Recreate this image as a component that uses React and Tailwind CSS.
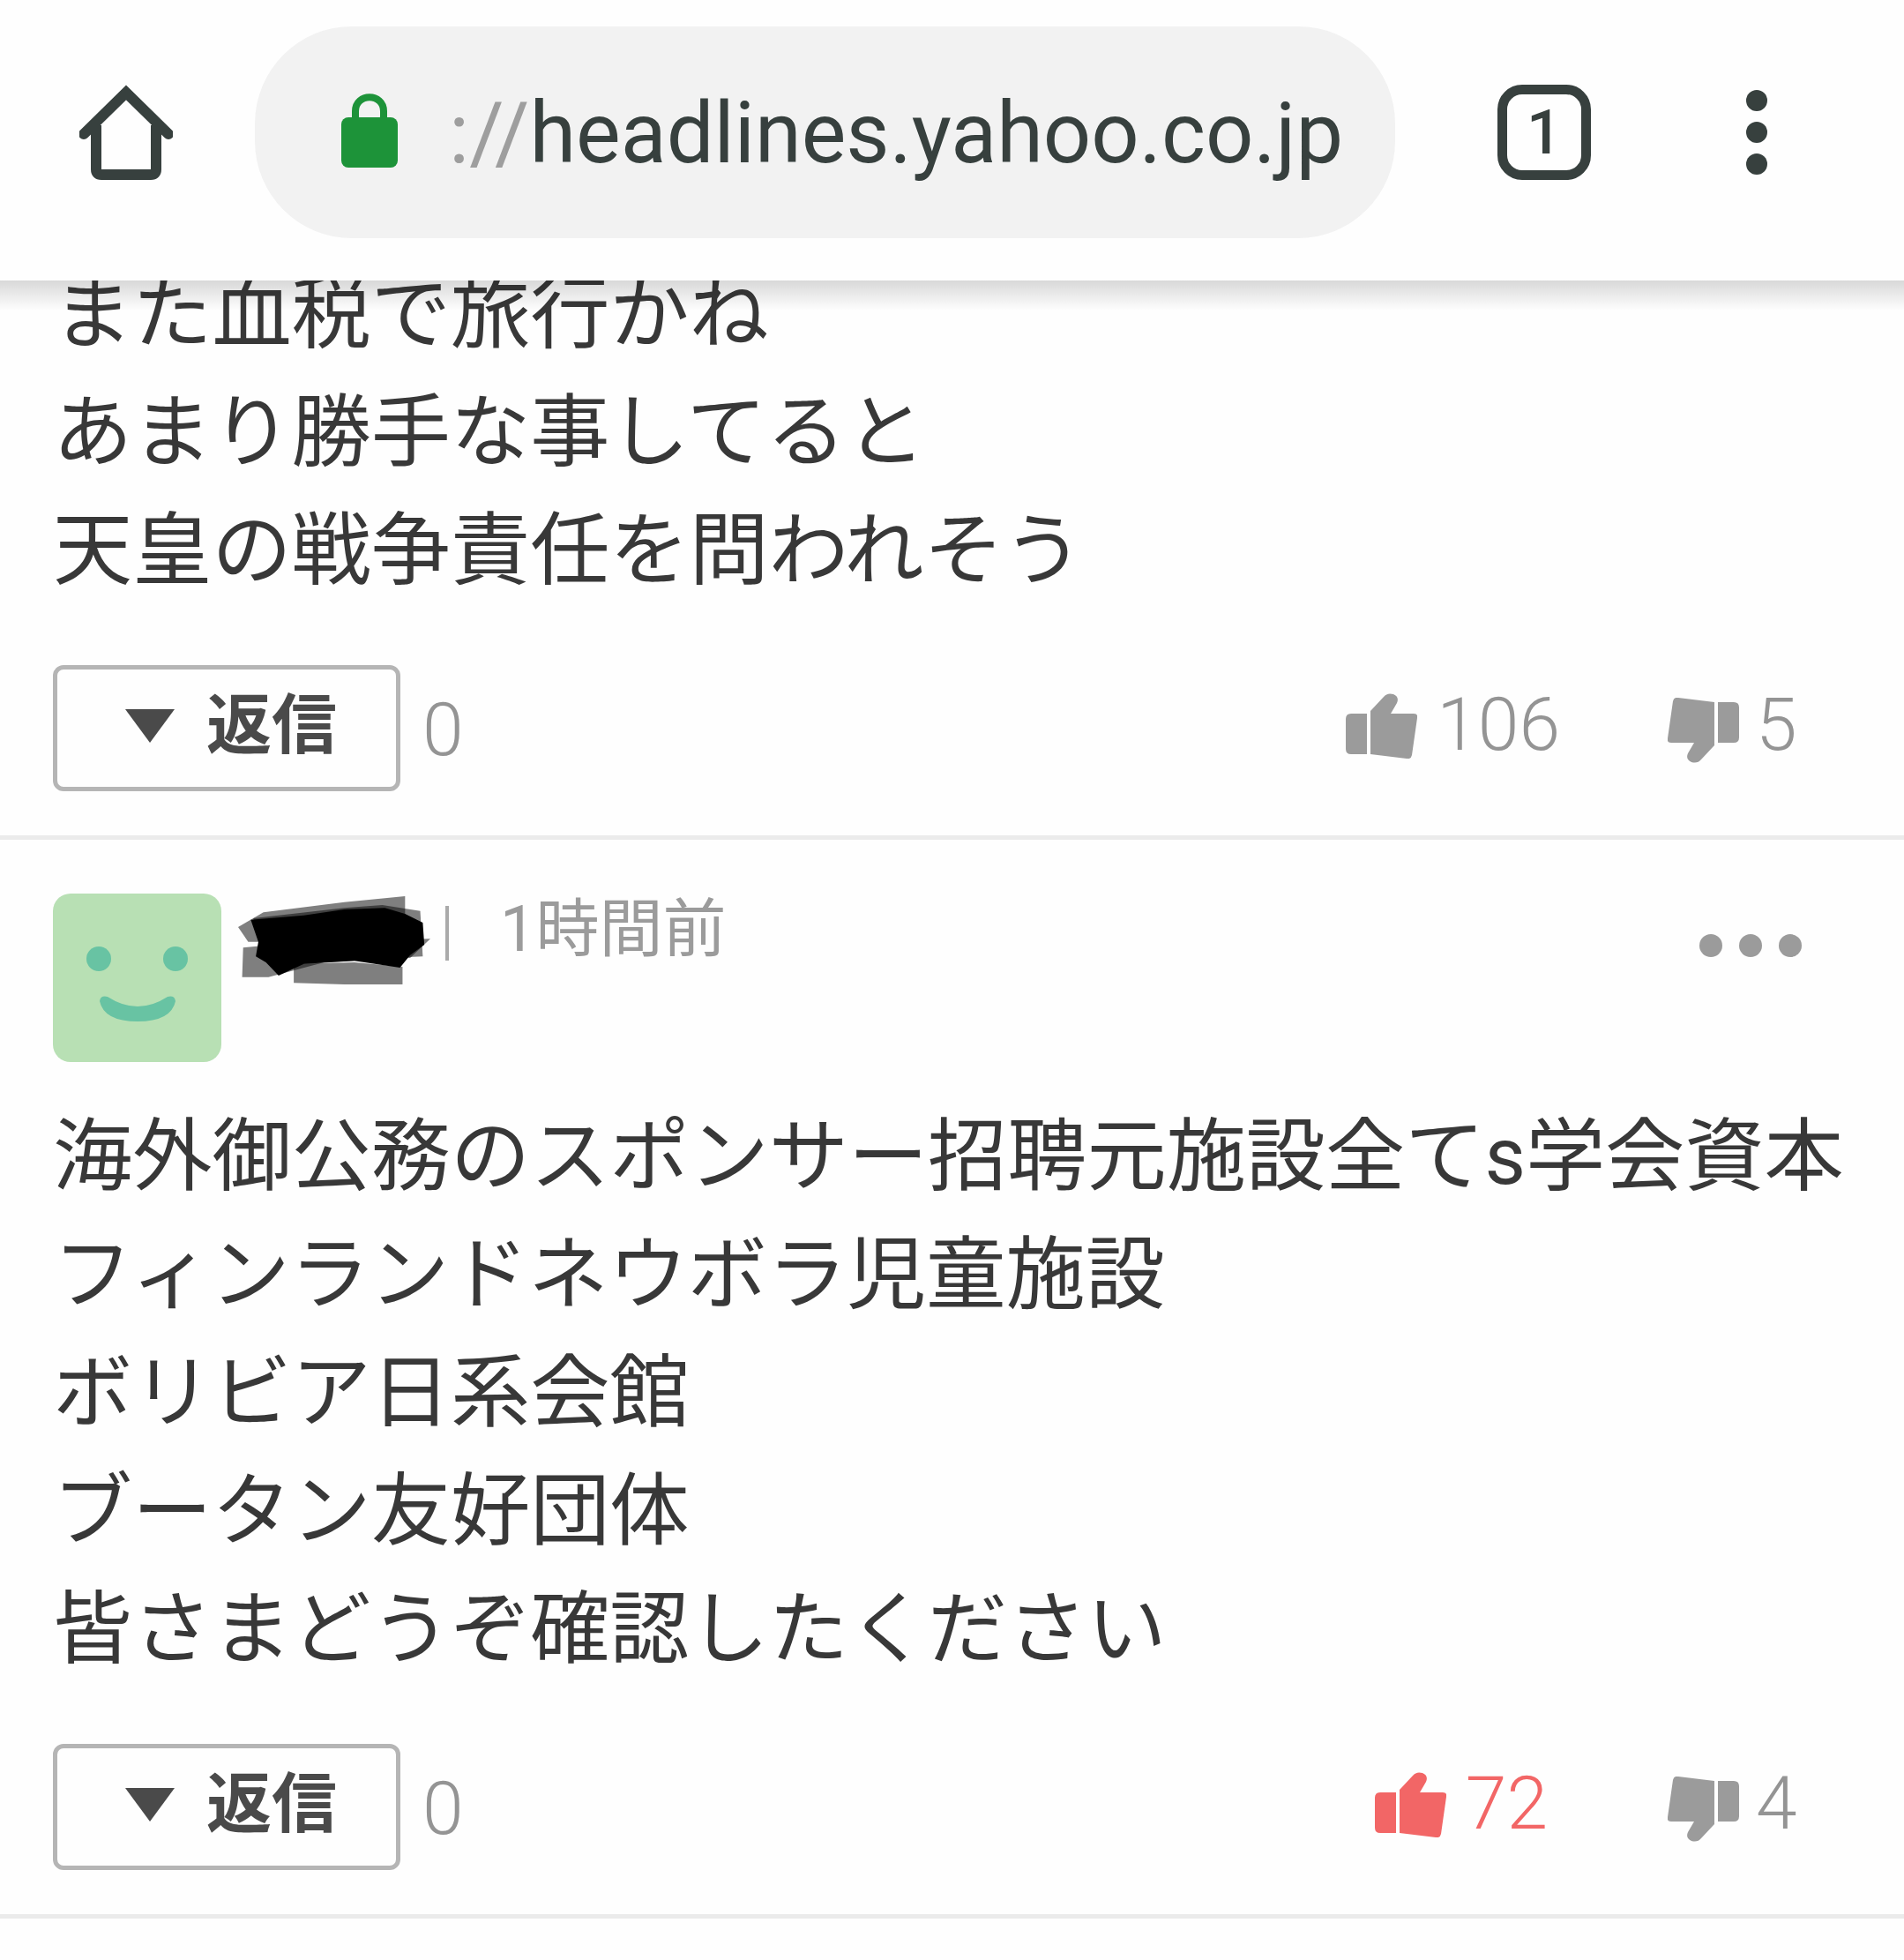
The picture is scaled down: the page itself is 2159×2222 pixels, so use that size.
const bodyFont = "font-['Roboto','Noto_Sans_CJK_JP',sans-serif]";

const HomeIcon = () => (
  <svg width="106" height="108" viewBox="0 0 106 108" fill="none" stroke="#37403e" strokeWidth="12" className="ml-[90px] shrink-0">
    <path d="M5 56 L53 9 L101 56" strokeLinecap="round" />
    <path d="M19 46 V96 Q19 102 25 102 H81 Q87 102 87 96 V46" />
  </svg>
);

const LockIcon = () => (
  <svg width="64" height="84" viewBox="0 0 64 84" className="mb-[4px] shrink-0">
    <path d="M16 32 V20 C16 -1 48 -1 48 20 V32" fill="none" stroke="#1d9339" strokeWidth="8" />
    <rect x="0" y="27" width="64" height="57" rx="8" fill="#1d9339" />
  </svg>
);

const Thumb = ({ color, down }) => (
  <svg
    width="81"
    height="74"
    viewBox="0 0 81 74"
    fill={color}
    className={down ? 'mt-[37px] shrink-0 rotate-180' : 'mt-[32px] shrink-0'}
  >
    <path d="M6 23 H24 V69 H6 Q0 69 0 63 V29 Q0 23 6 23 Z" />
    <path d="M28 20 L43 4 Q47 -1 54 1 Q61 4 58 11 L51 23 H77 Q82 23 81 28 L75 70 Q74 75 69 74 L28 69 Z" />
  </svg>
);

const Scribble = () => (
  <svg width="218" height="100" viewBox="470 885 380 300" preserveAspectRatio="none" className="ml-[19px] mt-[3px] shrink-0">
    <g fill="#000" fillOpacity="0.5">
      <path d="M470 990 L520 940 L680 905 L800 885 L800 1000 L600 1040 L490 1040 Z" />
      <path d="M500 960 L680 925 L755 915 L830 935 L835 1090 L700 1100 L520 1090 Z" />
      <path d="M480 1060 L600 1040 L850 1030 L810 1095 L640 1110 L530 1160 L478 1160 Z" />
      <path d="M580 1115 L700 1110 L795 1125 L795 1185 L680 1185 L580 1180 Z" />
    </g>
    <path d="M495 965 L600 950 L680 930 L760 925 L800 945 L835 975 L838 1050 L810 1085 L790 1128 L700 1105 L600 1115 L550 1155 L525 1110 L505 1090 L510 1040 Z" fill="#000" />
  </svg>
);

const Actions = ({ likes, dislikes, liked, likeClass }) => {
  const likeColor = liked ? '#f26666' : '#949494';
  return (
    <div className="flex h-[143px] items-center pl-[60px]">
      <div className="flex h-[143px] w-[394px] items-center rounded-[12px] border-[5px] border-[#b5b5b5] pl-[77px]">
        <div className="mb-[5px] h-0 w-0 border-x-[28px] border-t-[38px] border-x-transparent border-t-[#4a4a4a]" />
        <span className="mb-[5px] ml-[36px] text-[74px] font-bold leading-none text-[#4a4a4a]">返信</span>
      </div>
      <span className="ml-[25px] mt-[4px] text-[84px] font-light leading-none text-[#949494]">0</span>
      <div className={`ml-auto flex h-[143px] items-start ${likeClass}`}>
        <Thumb color={liked ? '#f26666' : '#9b9b9b'} />
        <span className="ml-[22px] mt-[26px] text-[84px] font-light leading-none" style={{ color: likeColor }}>{likes}</span>
      </div>
      <div className="flex h-[143px] w-[268px] items-start">
        <Thumb color="#9b9b9b" down />
        <span className="ml-[19px] mt-[26px] text-[84px] font-light leading-none text-[#949494]">{dislikes}</span>
      </div>
    </div>
  );
};

const Lines = ({ lines, className }) => (
  <div className={`pl-[60px] text-[90.2px] leading-[134px] whitespace-nowrap text-[#383838] ${className}`}>
    {lines.map((l) => (
      <div key={l}>{l}</div>
    ))}
  </div>
);

const App = () => {
  return (
    <div className={`h-[2222px] w-full overflow-hidden bg-[#fefefe] ${bodyFont}`}>
      <header className="relative z-10 h-[318px] bg-[#fefefe] pt-[30px]">
        <div className="flex h-[240px] items-center">
          <HomeIcon />
          <div className="ml-[93px] flex h-[240px] w-[1293px] items-center rounded-[110px] bg-[#f2f2f2] pl-[98px]">
            <LockIcon />
            <span className="ml-[58px] mt-[3px] whitespace-nowrap text-[95.5px] leading-none text-[#37403e]">
              <span className="text-[#9e9e9e]">://</span>headlines.yahoo.co.jp
            </span>
          </div>
          <div className="ml-[116px] flex h-[108px] w-[106px] items-center justify-center rounded-[28px] border-[11px] border-[#37403e]">
            <span className="text-[70px] font-medium leading-none text-[#37403e]">1</span>
          </div>
          <div className="ml-[176px] flex flex-col gap-[12px]">
            <div className="h-[24px] w-[24px] rounded-full bg-[#37403e]" />
            <div className="h-[24px] w-[24px] rounded-full bg-[#37403e]" />
            <div className="h-[24px] w-[24px] rounded-full bg-[#37403e]" />
          </div>
        </div>
        <div className="absolute left-0 top-full h-[34px] w-full bg-gradient-to-b from-black/15 to-black/0" />
      </header>

      <Lines
        className="-mt-[29px]"
        lines={['また血税で旅行かね', 'あまり勝手な事してると', '天皇の戦争責任を問われそう']}
      />
      <div className="mt-[63px]">
        <Actions likes="106" dislikes="5" likeClass="mr-[122px]" />
      </div>
      <div className="mt-[50px] h-[5px] bg-[#ebebeb]" />

      <div className="mt-[61px] flex items-start pl-[60px]">
        <div className="h-[191px] w-[191px] shrink-0 rounded-[20px] bg-[#b8e0b4]">
          <svg width="191" height="191" viewBox="0 0 191 191">
            <ellipse cx="52" cy="74" rx="14" ry="14" fill="#68c3a3" />
            <ellipse cx="139" cy="74" rx="14" ry="14" fill="#68c3a3" />
            <path d="M53 122 Q54 115 62 117 Q96 139 130 117 Q138 115 139 122 Q134 145 96 145 Q58 145 53 122 Z" fill="#68c3a3" />
          </svg>
        </div>
        <Scribble />
        <div className="ml-[17px] mt-[14px] h-[62px] w-[4px] shrink-0 bg-[#aaaaaa]" />
        <span className="ml-[58px] mt-[5px] text-[72px] leading-none text-[#9b9b9b]">1時間前</span>
        <div className="ml-auto mr-[116px] mt-[46px] flex gap-[19px]">
          <div className="h-[26px] w-[26px] rounded-full bg-[#9b9b9b]" />
          <div className="h-[26px] w-[26px] rounded-full bg-[#9b9b9b]" />
          <div className="h-[26px] w-[26px] rounded-full bg-[#9b9b9b]" />
        </div>
      </div>

      <Lines
        className="mt-[40px]"
        lines={[
          '海外御公務のスポンサー招聘元施設全てs学会資本',
          'フィンランドネウボラ児童施設',
          'ボリビア日系会館',
          'ブータン友好団体',
          '皆さまどうぞ確認したください',
        ]}
      />
      <div className="mt-[63px]">
        <Actions likes="72" dislikes="4" liked likeClass="mr-[136px]" />
      </div>
      <div className="mt-[50px] h-[5px] bg-[#ebebeb]" />
    </div>
  );
};

export default App;
